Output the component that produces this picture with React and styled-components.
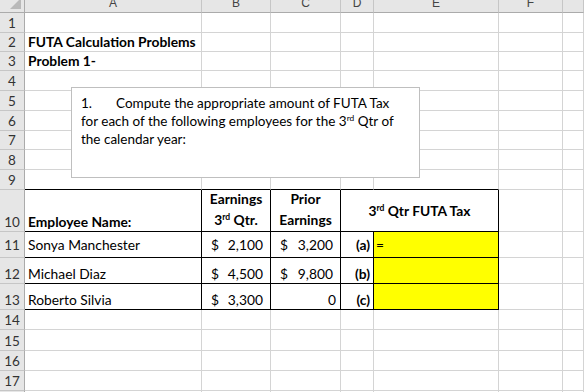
import React from 'react';
import styled, { createGlobalStyle } from 'styled-components';

const GlobalStyle = createGlobalStyle`
  html, body {
    margin: 0;
    padding: 0;
    background: #ffffff;
    overflow: hidden;
  }
  body {
    font-family: Lato, "Open Sans", sans-serif;
  }
`;

const COLS = ['A', 'B', 'C', 'D', 'E', 'F', ''];
const ROW_H = [20, 20, 19, 19, 20, 20, 20, 19, 20, 20, 42, 26, 26, 26, 20, 21, 20, 20, 20];
const GRID = '#d4d4d4';
const INK = '#000000';

const Sheet = styled.div`
  position: relative;
  margin-top: -7px;
  display: grid;
  grid-template-columns: 25px 177px 69px 70px 33px 125px 64px 1fr;
  grid-template-rows: ${ROW_H.map((h) => h + 'px').join(' ')};
  font-size: 13.8px;
  color: #000;
`;

const Corner = styled.div`
  position: relative;
  background: #e6e6e6;
  border-right: 1px solid #ababab;
  border-bottom: 1px solid #ababab;
  box-sizing: border-box;
  &::after {
    content: '';
    position: absolute;
    right: 3px;
    bottom: 3px;
    width: 0;
    height: 0;
    border-left: 11px solid transparent;
    border-bottom: 11px solid #b9b9b9;
  }
`;

const ColHead = styled.div`
  background: #e6e6e6;
  border-right: 1px solid #c6c6c6;
  border-bottom: 1px solid #ababab;
  box-sizing: border-box;
  display: flex;
  align-items: center;
  justify-content: center;
  font-family: "Liberation Sans", Arial, sans-serif;
  font-size: 12px;
  color: #444;
`;

const RowHead = styled.div`
  background: #e6e6e6;
  border-right: 1px solid #ababab;
  border-bottom: 1px solid #c6c6c6;
  box-sizing: border-box;
  display: flex;
  align-items: ${(p) => (p.$mid ? 'center' : 'flex-end')};
  justify-content: center;
  font-size: 13.5px;
  line-height: 18px;
  color: #333;
`;

const Cell = styled.div`
  box-sizing: border-box;
  grid-column: ${(p) => (p.$span ? `span ${p.$span}` : 'auto')};
  border-right: 1px solid ${(p) => p.$right || GRID};
  border-bottom: 1px solid ${(p) => p.$bottom || GRID};
  background: ${(p) => p.$bg || 'transparent'};
  display: flex;
  align-items: ${(p) => p.$valign || 'flex-end'};
  justify-content: ${(p) => p.$align || 'flex-start'};
  padding: 0 ${(p) => p.$padR ?? 3}px 0 ${(p) => p.$padL ?? 3}px;
  font-weight: ${(p) => (p.$bold ? 700 : 400)};
  line-height: 18px;
  white-space: nowrap;
  overflow: visible;
`;

const Stack = styled.div`
  display: flex;
  flex-direction: column;
  align-items: center;
  width: 100%;
  line-height: 21px;
  padding-bottom: 1px;
`;

const Sup = styled.sup`
  font-size: 0.62em;
  line-height: 0;
  vertical-align: 0.6em;
`;

const Money = styled.div`
  display: flex;
  justify-content: space-between;
  width: 100%;
`;

const TextBox = styled.div`
  position: absolute;
  left: 71px;
  top: 94px;
  width: 349px;
  height: 91px;
  box-sizing: border-box;
  background: #ffffff;
  border: 1px solid #bfbfbf;
  padding: 6px 9px;
  line-height: 18px;
  font-size: 13.5px;
  white-space: nowrap;
`;

const ListNum = styled.span`
  display: inline-block;
  width: 35px;
`;

const people = [
  { row: 11, name: 'Sonya Manchester', q3: '2,100', prior: '3,200', tag: '(a)', val: '=', mid: true },
  { row: 12, name: 'Michael Diaz', q3: '4,500', prior: '9,800', tag: '(b)' },
  { row: 13, name: 'Roberto Silvia', q3: '3,300', prior: null, tag: '(c)' },
];

function Blank({ n }) {
  return Array.from({ length: n }, (_, i) => <Cell key={i} />);
}

function PlainRow({ num, mid, children }) {
  return (
    <>
      <RowHead $mid={mid}>{num}</RowHead>
      {children}
    </>
  );
}

export default function App() {
  return (
    <>
      <GlobalStyle />
      <Sheet>
        <Corner />
        {COLS.map((c, i) => (
          <ColHead key={i}>{c}</ColHead>
        ))}

        <PlainRow num={1}><Blank n={7} /></PlainRow>
        <PlainRow num={2}>
          <Cell $bold>FUTA Calculation Problems</Cell>
          <Blank n={6} />
        </PlainRow>
        <PlainRow num={3}>
          <Cell $bold>Problem 1-</Cell>
          <Blank n={6} />
        </PlainRow>
        {[4, 5, 6, 7, 8].map((n) => (
          <PlainRow key={n} num={n}><Blank n={7} /></PlainRow>
        ))}
        <PlainRow num={9}>
          <Cell $bottom={INK} />
          <Cell $bottom={INK} />
          <Cell $bottom={INK} />
          <Cell $bottom={INK} />
          <Cell $bottom={INK} />
          <Cell />
          <Cell />
        </PlainRow>

        <PlainRow num={10}>
          <Cell $bold $right={INK} $bottom={INK}>Employee Name:</Cell>
          <Cell $bold $right={INK} $bottom={INK} $padL={0} $padR={0}>
            <Stack>
              <span>Earnings</span>
              <span>3<Sup>rd</Sup> Qtr.</span>
            </Stack>
          </Cell>
          <Cell $bold $right={INK} $bottom={INK} $padL={0} $padR={0}>
            <Stack>
              <span>Prior</span>
              <span>Earnings</span>
            </Stack>
          </Cell>
          <Cell $bold $span={2} $right={INK} $bottom={INK} $align="center" $valign="center">
            <span>3<Sup>rd</Sup> Qtr FUTA Tax</span>
          </Cell>
          <Cell />
          <Cell />
        </PlainRow>

        {people.map((p) => {
          const v = p.mid ? 'center' : 'flex-end';
          return (
            <PlainRow key={p.row} num={p.row} mid={p.mid}>
              <Cell $right={INK} $bottom={INK} $valign={v}>{p.name}</Cell>
              <Cell $right={INK} $bottom={INK} $valign={v} $padL={9} $padR={7}>
                <Money><span>$</span><span>{p.q3}</span></Money>
              </Cell>
              <Cell $right={INK} $bottom={INK} $valign={v} $padL={9} $padR={p.prior ? 7 : 4} $align="flex-end">
                {p.prior ? (
                  <Money><span>$</span><span>{p.prior}</span></Money>
                ) : (
                  <span>0</span>
                )}
              </Cell>
              <Cell $bold $right={INK} $bottom={INK} $valign={v} $align="flex-end" $padR={3}>{p.tag}</Cell>
              <Cell $right={INK} $bottom={INK} $valign={v} $bg="#ffff00" $padL={2}>{p.val || ''}</Cell>
              <Cell />
              <Cell />
            </PlainRow>
          );
        })}

        {[14, 15, 16, 17, 18].map((n) => (
          <PlainRow key={n} num={n}><Blank n={7} /></PlainRow>
        ))}

        <TextBox>
          <div><ListNum>1.</ListNum>Compute the appropriate amount of FUTA Tax</div>
          <div>for each of the following employees for the 3<Sup>rd</Sup> Qtr of</div>
          <div>the calendar year:</div>
        </TextBox>
      </Sheet>
    </>
  );
}
